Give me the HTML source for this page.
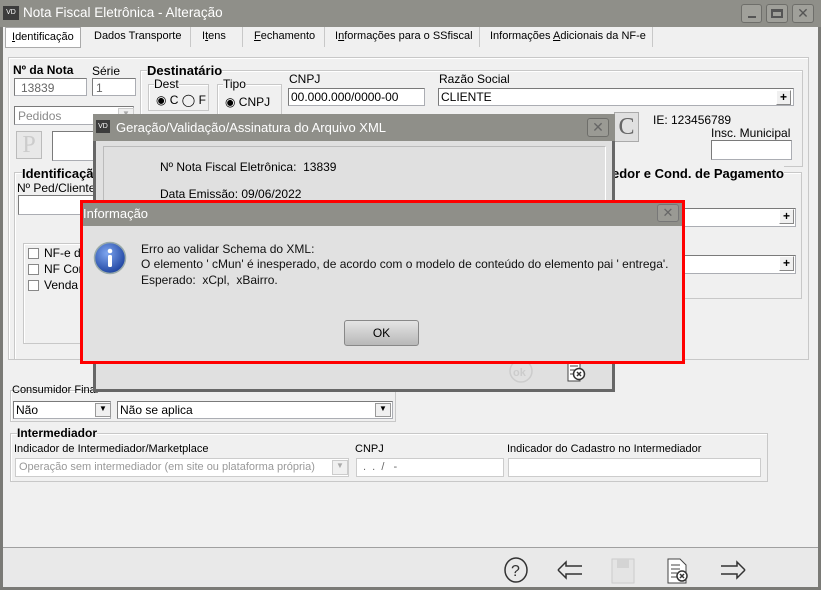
<!DOCTYPE html>
<html><head><meta charset="utf-8"><style>
*{box-sizing:border-box;margin:0;padding:0}
body{width:821px;height:590px;overflow:hidden;background:#f0f0f0;font-family:"Liberation Sans","DejaVu Sans",sans-serif;font-size:12px;color:#000;position:relative}
.a{position:absolute}
.t{position:absolute;white-space:nowrap;font-size:12px}
.tab{position:absolute;white-space:nowrap;font-size:11px}
.in{position:absolute;background:#fff;border:1px solid #abadb3;border-top-color:#7a7a7a;border-left-color:#7a7a7a}
.grp{position:absolute;border:1px solid #c8c8c8;box-shadow:inset 1px 1px 0 #fff}
.b{font-weight:bold}
.plus{position:absolute;width:15px;height:15px;background:#f0f0f0;border:1px solid #888;border-top-color:#fff;border-left-color:#fff;font-size:12px;font-weight:bold;text-align:center;line-height:13px}
.dd{position:absolute;width:16px;background:#f0f0f0;border:1px solid #999;font-size:8px;text-align:center}
</style></head><body>
<div class="a" style="left:0;top:0;width:821px;height:590px;border:3px solid #7a7a76;border-top:none"></div>
<div class="a" style="left:0;top:0;width:821px;height:27px;background:#8f8f89"></div>
<div class="a" style="left:3px;top:6px;width:16px;height:14px;background:#3c3c3c;color:#fff;font-size:7px;line-height:14px;text-align:center">VD</div>
<div class="t" style="left:23px;top:5px;font-size:13.5px;color:#fff">Nota Fiscal Eletrônica - Alteração</div>
<div class="a" style="left:741px;top:4px;width:21px;height:19px;border:1px solid #6e6e6a;border-radius:3px;background:#a0a09a"></div>
<div class="a" style="left:748px;top:16px;width:8px;height:2px;background:#555"></div>
<div class="a" style="left:766px;top:4px;width:22px;height:19px;border:1px solid #6e6e6a;border-radius:3px;background:#a0a09a"></div>
<div class="a" style="left:771px;top:9px;width:12px;height:9px;border:2px solid #555;border-top-width:3px"></div>
<div class="a" style="left:792px;top:4px;width:22px;height:19px;border:1px solid #6e6e6a;border-radius:3px;background:#a0a09a;color:#555;font-weight:bold;font-size:14px;text-align:center;line-height:17px">✕</div>
<!-- tabs -->
<div class="a" style="left:5px;top:27px;width:76px;height:21px;border:1px solid #aaa;background:#fff"></div>
<div class="tab" style="left:12px;top:31px"><u>I</u>dentificação</div>
<div class="tab" style="left:94px;top:30px">Dados Transporte</div>
<div class="a" style="left:190px;top:27px;width:1px;height:20px;background:#c8c8c8"></div>
<div class="tab" style="left:202px;top:30px">I<u>t</u>ens</div>
<div class="a" style="left:242px;top:27px;width:1px;height:20px;background:#c8c8c8"></div>
<div class="tab" style="left:254px;top:30px"><u>F</u>echamento</div>
<div class="a" style="left:324px;top:27px;width:1px;height:20px;background:#c8c8c8"></div>
<div class="tab" style="left:335px;top:30px">I<u>n</u>formações para o SSfiscal</div>
<div class="a" style="left:479px;top:27px;width:1px;height:20px;background:#c8c8c8"></div>
<div class="tab" style="left:490px;top:30px">Informações <u>A</u>dicionais da NF-e</div>
<div class="a" style="left:652px;top:27px;width:1px;height:20px;background:#c8c8c8"></div>
<!-- content panel -->
<div class="grp" style="left:8px;top:57px;width:801px;height:303px"></div>
<div class="t b" style="left:13px;top:63px">Nº da Nota</div>
<div class="t" style="left:92px;top:64px">Série</div>
<div class="in" style="left:14px;top:78px;width:73px;height:18px;color:#666;padding:2px 6px">13839</div>
<div class="in" style="left:92px;top:78px;width:44px;height:18px;color:#666;padding:2px 3px">1</div>
<div class="in" style="left:14px;top:106px;width:120px;height:19px;color:#888;padding:2px 3px">Pedidos</div>
<div class="dd" style="left:118px;top:108px;height:15px;color:#aaa;border-color:#ccc">▼</div>
<div class="a" style="left:16px;top:131px;width:26px;height:28px;border:1px solid #bbb;background:#e8e8e8;color:#ccc;font-family:'Liberation Serif',serif;font-size:24px;text-align:center;line-height:26px">P</div>
<div class="in" style="left:52px;top:131px;width:50px;height:30px"></div>
<div class="grp" style="left:14px;top:172px;width:90px;height:188px"></div>
<div class="t b" style="left:22px;top:166px;background:#f0f0f0;font-size:13px">Identificação</div>
<div class="t" style="left:17px;top:181px">Nº Ped/Cliente</div>
<div class="in" style="left:18px;top:195px;width:80px;height:20px"></div>
<div class="grp" style="left:23px;top:243px;width:70px;height:101px"></div>
<div class="a" style="left:28px;top:248px;width:11px;height:11px;border:1px solid #888;background:#fff"></div><div class="t" style="left:44px;top:246px">NF-e de</div>
<div class="a" style="left:28px;top:264px;width:11px;height:11px;border:1px solid #888;background:#fff"></div><div class="t" style="left:44px;top:262px">NF Com</div>
<div class="a" style="left:28px;top:280px;width:11px;height:11px;border:1px solid #888;background:#fff"></div><div class="t" style="left:44px;top:278px">Venda p</div>
<!-- destinatario -->
<div class="grp" style="left:140px;top:70px;width:663px;height:97px"></div>
<div class="t b" style="left:147px;top:63px;background:#f0f0f0;font-size:13px">Destinatário</div>
<div class="grp" style="left:148px;top:84px;width:61px;height:27px"></div>
<div class="t" style="left:154px;top:77px;background:#f0f0f0">Dest</div>
<div class="t" style="left:156px;top:93px">◉ C ◯ F</div>
<div class="grp" style="left:217px;top:84px;width:65px;height:40px"></div>
<div class="t" style="left:223px;top:77px;background:#f0f0f0">Tipo</div>
<div class="t" style="left:225px;top:95px">◉ CNPJ</div>
<div class="t" style="left:289px;top:72px">CNPJ</div>
<div class="in" style="left:288px;top:88px;width:137px;height:18px;padding:1px 2px">00.000.000/0000-00</div>
<div class="t" style="left:439px;top:72px">Razão Social</div>
<div class="in" style="left:438px;top:88px;width:356px;height:18px;padding:1px 2px">CLIENTE</div>
<div class="plus" style="left:776px;top:90px">+</div>
<div class="a" style="left:614px;top:112px;width:25px;height:30px;border:1px solid #aaa;background:#e0e0e0;color:#666;font-family:'Liberation Serif',serif;font-size:24px;text-align:center;line-height:28px">C</div>
<div class="t" style="left:653px;top:113px">IE: 123456789</div>
<div class="t" style="left:711px;top:126px">Insc. Municipal</div>
<div class="in" style="left:711px;top:140px;width:81px;height:20px"></div>
<div class="grp" style="left:600px;top:172px;width:202px;height:127px"></div>
<div class="t b" style="left:612px;top:166px;background:#f0f0f0;font-size:13px">edor e Cond. de Pagamento</div>
<div class="in" style="left:612px;top:208px;width:184px;height:19px"></div><div class="plus" style="left:779px;top:209px">+</div>
<div class="in" style="left:612px;top:255px;width:184px;height:19px"></div><div class="plus" style="left:779px;top:256px">+</div>
<!-- consumidor -->
<div class="grp" style="left:10px;top:390px;width:386px;height:32px"></div>
<div class="t" style="left:12px;top:384px;font-size:11px">Consumidor Final</div>
<div class="in" style="left:13px;top:401px;width:98px;height:18px;padding:1px 2px">Não</div><div class="dd" style="left:95px;top:403px;height:14px">▼</div>
<div class="in" style="left:117px;top:401px;width:276px;height:18px;padding:1px 2px">Não se aplica</div><div class="dd" style="left:375px;top:403px;height:14px">▼</div>
<div class="grp" style="left:10px;top:433px;width:758px;height:49px"></div>
<div class="t b" style="left:17px;top:426px;background:#f0f0f0">Intermediador</div>
<div class="t" style="left:14px;top:443px;font-size:11px">Indicador de Intermediador/Marketplace</div>
<div class="in" style="left:15px;top:458px;width:334px;height:19px;color:#999;padding:2px 3px;font-size:11px;border-color:#ccc">Operação sem intermediador (em site ou plataforma própria)</div>
<div class="dd" style="left:332px;top:460px;height:15px;color:#aaa;border-color:#ccc">▼</div>
<div class="t" style="left:355px;top:443px;font-size:11px">CNPJ</div>
<div class="in" style="left:356px;top:458px;width:148px;height:19px;color:#666;padding:2px 6px;font-size:11px;border-color:#ccc">. &nbsp;. &nbsp;/ &nbsp; -</div>
<div class="t" style="left:507px;top:443px;font-size:11px">Indicador do Cadastro no Intermediador</div>
<div class="in" style="left:508px;top:458px;width:253px;height:19px;border-color:#ccc"></div>
<!-- bottom toolbar -->
<div class="a" style="left:3px;top:547px;width:815px;height:1px;background:#a0a0a0"></div>
<div class="a" style="left:3px;top:548px;width:815px;height:39px;background:#e9e9e9"></div>
<svg class="a" style="left:500px;top:556px" width="260" height="30">
<ellipse cx="16" cy="14" rx="11" ry="12" fill="none" stroke="#333" stroke-width="1.5"/>
<text x="11" y="20" font-size="16" font-family="Liberation Sans" fill="#333">?</text>
<path d="M58 14 L66 6 L66 10 L82 10 M58 14 L66 22 L66 18 L82 18" fill="none" stroke="#333" stroke-width="1.5"/>
<rect x="112" y="3" width="22" height="24" fill="#e4e4e4" stroke="#ccc"/><rect x="117" y="3" width="12" height="9" fill="#d4d4d4"/>
<path d="M168 3 h12 l6 6 v18 h-18z" fill="#fff" stroke="#444"/><path d="M171 9h9M171 13h9M171 17h6M171 21h6" stroke="#444"/>
<circle cx="182" cy="20" r="5" fill="#fff" stroke="#333" stroke-width="1.5"/><path d="M180 18l4 4M184 18l-4 4" stroke="#333" stroke-width="1.5"/>
<path d="M245 14 L237 6 L237 10 L221 10 M245 14 L237 22 L237 18 L221 18" fill="none" stroke="#333" stroke-width="1.5"/>
</svg>
<!-- XML dialog -->
<div class="a" style="left:93px;top:114px;width:522px;height:278px;background:#e0e0e0;border:3px solid #676767;border-top:none"></div>
<div class="a" style="left:93px;top:114px;width:522px;height:27px;background:#8f8f89"></div>
<div class="a" style="left:96px;top:120px;width:14px;height:13px;background:#3c3c3c;color:#fff;font-size:7px;line-height:13px;text-align:center">VD</div>
<div class="t" style="left:116px;top:120px;font-size:13px;color:#fff">Geração/Validação/Assinatura do Arquivo XML</div>
<div class="a" style="left:587px;top:118px;width:22px;height:19px;border:1px solid #6e6e6a;border-radius:3px;background:#9a9a94;color:#666;font-weight:bold;font-size:14px;text-align:center;line-height:17px">✕</div>
<div class="a" style="left:103px;top:146px;width:503px;height:100px;border:1px solid #bbb;border-right-color:#fff;border-bottom:none"></div>
<div class="t" style="left:160px;top:160px">Nº Nota Fiscal Eletrônica: &nbsp;13839</div>
<div class="t" style="left:160px;top:187px">Data Emissão: 09/06/2022</div>
<svg class="a" style="left:506px;top:358px" width="80" height="28">
<circle cx="15" cy="13" r="11" fill="none" stroke="#ccc" stroke-width="1.5"/><text x="7" y="18" font-size="11" font-weight="bold" fill="#ccc" font-family="Liberation Sans">ok</text>
<path d="M62 3 h12 v20 h-12z" fill="#fff" stroke="#444"/><path d="M64 8h8M64 12h6M64 16h6" stroke="#444"/>
<circle cx="73" cy="16" r="5.5" fill="#fff" stroke="#333" stroke-width="1.5"/><path d="M71 14l4 4M75 14l-4 4" stroke="#333" stroke-width="1.5"/>
</svg>
<!-- Information dialog -->
<div class="a" style="left:80px;top:200px;width:605px;height:164px;border:3px solid #f00;background:#e1e1e1"></div>
<div class="a" style="left:83px;top:203px;width:599px;height:23px;background:#8f8f89"></div>
<div class="t" style="left:83px;top:206px;font-size:13px;color:#fff">Informação</div>
<div class="a" style="left:657px;top:204px;width:22px;height:18px;border:1px solid #777;border-radius:3px;background:#9a9a94;color:#666;font-weight:bold;font-size:13px;text-align:center;line-height:16px">✕</div>
<svg class="a" style="left:93px;top:241px" width="34" height="34">
<defs><radialGradient id="g" cx="40%" cy="35%" r="70%"><stop offset="0" stop-color="#7ea6f0"/><stop offset="1" stop-color="#1a3f9c"/></radialGradient></defs>
<circle cx="17" cy="17" r="15.5" fill="url(#g)" stroke="#9aa" stroke-width="1.5"/>
<circle cx="17" cy="10" r="2.3" fill="#fff"/><rect x="15" y="14" width="4" height="12" rx="1.5" fill="#fff"/>
</svg>
<div class="t" style="left:141px;top:242px;color:#111">Erro ao validar Schema do XML:</div>
<div class="t" style="left:141px;top:257px;color:#111">O elemento ' cMun' é inesperado, de acordo com o modelo de conteúdo do elemento pai ' entrega'.</div>
<div class="t" style="left:141px;top:273px;color:#111">Esperado: &nbsp;xCpl, &nbsp;xBairro.</div>
<div class="a" style="left:344px;top:320px;width:75px;height:26px;border:1px solid #888;border-radius:3px;background:linear-gradient(#e4e4e4,#b8b8b8);text-align:center;line-height:24px">OK</div>
</body></html>
